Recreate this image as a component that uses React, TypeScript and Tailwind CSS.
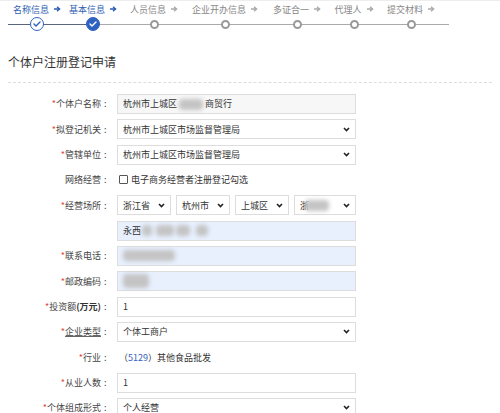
import React from "react";

const font = { fontFamily: '"Noto Sans CJK SC", "Liberation Sans", sans-serif' };

type Step = { name: string; width: string; state: "done" | "current" | "todo" };

const steps: Step[] = [
  { name: "名称信息", width: "w-[58px]", state: "done" },
  { name: "基本信息", width: "w-[54px]", state: "current" },
  { name: "人员信息", width: "w-[68px]", state: "todo" },
  { name: "企业开办信息", width: "w-[74px]", state: "todo" },
  { name: "多证合一", width: "w-[70px]", state: "todo" },
  { name: "代理人", width: "w-[44px]", state: "todo" },
  { name: "提交材料", width: "w-[70px]", state: "todo" },
];

function Arrow({ active }: { active: boolean }) {
  return (
    <svg width="7" height="6" viewBox="0 0 7 6" className={active ? "text-[#2f5fb3]" : "text-[#aaa]"}>
      <path d="M0 3h5M3 0.8L5.6 3L3 5.2" fill="none" stroke="currentColor" strokeWidth="1.4" />
    </svg>
  );
}

function StepDot({ state }: { state: Step["state"] }) {
  if (state === "todo") {
    return <span className="block h-[9px] w-[9px] rounded-full border-2 border-[#999] bg-white" />;
  }
  const filled = state === "current";
  return (
    <span
      className={
        "flex h-[14px] w-[14px] items-center justify-center rounded-full border-[1.5px] border-[#2f62c0] " +
        (filled ? "bg-[#2f62c0]" : "bg-white")
      }
    >
      <svg width="8" height="6" viewBox="0 0 8 6">
        <path
          d="M1 3l2 2 4-4"
          fill="none"
          stroke={filled ? "#fff" : "#2f62c0"}
          strokeWidth="1.4"
          strokeLinecap="round"
          strokeLinejoin="round"
        />
      </svg>
    </span>
  );
}

function Steps() {
  return (
    <div className="relative pl-[8px] pt-[2px]">
      <div className="absolute left-[8px] top-[23px] h-px w-[85px] bg-[#5a6680]" />
      <div className="absolute left-[93px] top-[23px] h-px w-[356px] bg-[#aaa]" />
      <div className="relative flex">
        {steps.map((s) => {
          const active = s.state !== "todo";
          return (
            <div key={s.name} className={"flex flex-col items-center " + s.width}>
              <div
                className={
                  "flex h-[12px] items-center gap-[5px] text-[9px] leading-none " +
                  (active ? "text-[#2f5fb3]" : "text-[#888]")
                }
              >
                <span>{s.name}</span>
                <Arrow active={active} />
              </div>
              <div className="mt-[2px] flex h-[14px] items-center">
                <StepDot state={s.state} />
              </div>
            </div>
          );
        })}
      </div>
    </div>
  );
}

function Blur({ w, className = "" }: { w: string; className?: string }) {
  return <span className={"inline-block h-[11px] rounded-sm bg-[#c4c4c4] blur-[2px] " + w + " " + className} />;
}

function Chevron() {
  return (
    <svg width="7" height="5" viewBox="0 0 7 5" className="shrink-0">
      <path d="M1 1l2.5 2.5L6 1" fill="none" stroke="#222" strokeWidth="1.6" />
    </svg>
  );
}

function Field({ children, tone = "white" }: { children: React.ReactNode; tone?: "white" | "gray" | "blue" }) {
  const bg = tone === "gray" ? "bg-[#f7f7f7]" : tone === "blue" ? "bg-[#e8f0fe]" : "bg-white";
  return (
    <div className={"flex h-[20px] w-[239px] items-center border border-[#ddd] px-[5px] text-[9px] text-[#333] " + bg}>
      {children}
    </div>
  );
}

function Select({ value, w = "w-[239px]" }: { value: React.ReactNode; w?: string }) {
  return (
    <div className={"flex h-[20px] items-center justify-between border border-[#ddd] bg-white px-[5px] text-[9px] text-[#333] " + w}>
      <span className="flex items-center">{value}</span>
      <Chevron />
    </div>
  );
}

function Row({
  label,
  required = true,
  colon = true,
  children,
}: {
  label?: React.ReactNode;
  required?: boolean;
  colon?: boolean;
  children: React.ReactNode;
}) {
  return (
    <div className="flex h-[20px] items-center">
      <div className="flex w-[112px] items-center justify-end text-[9px] text-[#444]">
        {required ? <span className="text-[#e0463c]">*</span> : null}
        {label}
        {colon ? <span className="ml-[3px] w-[8px]">:</span> : null}
      </div>
      <div className="ml-[5px]">{children}</div>
    </div>
  );
}

export default function App() {
  return (
    <div className="h-[413px] w-[500px] overflow-hidden border-t border-[#eee] bg-white" style={font}>
      <Steps />
      <div className="px-[8px]">
        <div className="mt-[23px] border-b border-dashed border-[#ddd] pb-[12px] text-[12px] leading-[16px] text-[#333]">
          个体户注册登记申请
        </div>
      </div>
      <div className="mt-[11px] flex flex-col gap-[5.33px]">
        <Row label="个体户名称">
          <Field tone="gray">
            杭州市上城区
            <Blur w="w-[24px]" className="mx-[2px]" />
            商贸行
          </Field>
        </Row>
        <Row label="拟登记机关">
          <Select value="杭州市上城区市场监督管理局" />
        </Row>
        <Row label="管辖单位">
          <Select value="杭州市上城区市场监督管理局" />
        </Row>
        <Row label="网络经营" required={false}>
          <div className="flex items-center gap-[3px] pl-[2px] text-[9px] text-[#333]">
            <span className="block h-[9px] w-[9px] rounded-[1px] border border-[#555] bg-white" />
            电子商务经营者注册登记勾选
          </div>
        </Row>
        <Row label="经营场所">
          <div className="flex gap-[5px]">
            <Select value="浙江省" w="w-[54px]" />
            <Select value="杭州市" w="w-[54px]" />
            <Select value="上城区" w="w-[54px]" />
            <Select
              value={
                <>
                  浙
                  <Blur w="w-[24px]" className="-ml-[4px]" />
                </>
              }
              w="w-[62px]"
            />
          </div>
        </Row>
        <Row required={false} colon={false}>
          <Field tone="blue">
            永西
            <Blur w="w-[10px]" className="ml-[1px]" />
            <Blur w="w-[18px]" className="ml-[4px]" />
            <Blur w="w-[14px]" className="ml-[2px]" />
            <Blur w="w-[12px]" className="ml-[6px]" />
          </Field>
        </Row>
        <Row label="联系电话">
          <Field tone="blue">
            <Blur w="w-[52px]" />
          </Field>
        </Row>
        <Row label="邮政编码">
          <Field tone="blue">
            <Blur w="w-[26px]" className="h-[14px]" />
          </Field>
        </Row>
        <Row
          label={
            <>
              投资额<span className="font-bold text-[#333]">(万元)</span>
            </>
          }
        >
          <Field>1</Field>
        </Row>
        <Row label={<span className="underline decoration-[#666]">企业类型</span>}>
          <Select value="个体工商户" />
        </Row>
        <Row label="行业">
          <div className="pl-[2px] text-[9px] text-[#333]">
            （<span className="text-[#2f62c0]">5129</span>）其他食品批发
          </div>
        </Row>
        <Row label="从业人数">
          <Field>1</Field>
        </Row>
        <Row label="个体组成形式">
          <Select value="个人经营" />
        </Row>
      </div>
    </div>
  );
}
